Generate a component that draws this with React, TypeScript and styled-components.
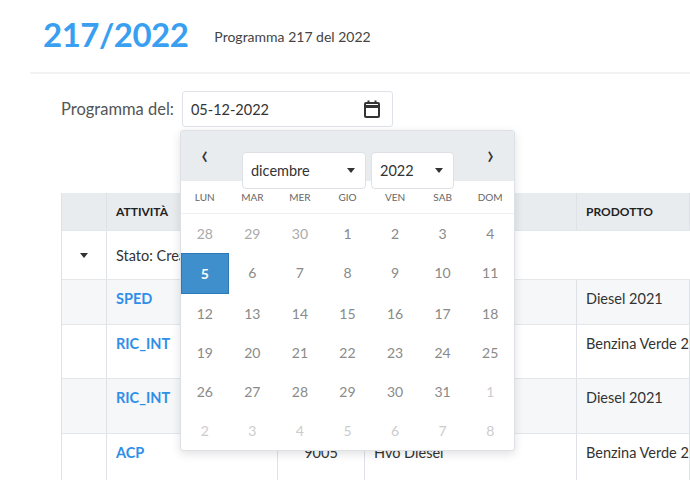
import styled, { createGlobalStyle } from 'styled-components';

const Global = createGlobalStyle`
  body { margin: 0; font-family: Lato, 'Noto Sans', sans-serif; color: #333; background: #fff; }
`;

const Page = styled.div`
  width: 690px;
  height: 480px;
  overflow: hidden;
  position: relative;
`;
const TitleBar = styled.div`
  display: flex;
  align-items: center;
  gap: 26px;
  height: 74px;
  padding: 0 0 4px 13px;
  margin-left: 30px;
  border-bottom: 2px solid #f1f3f5;
  box-sizing: border-box;
`;
const Title = styled.h1`
  margin: 0;
  font-size: 33px;
  font-weight: 700;
  color: #3a9ff0;
  letter-spacing: -0.5px;
`;
const Subtitle = styled.span`
  font-size: 14px;
  color: #444;
  padding-top: 4px;
`;
const FilterRow = styled.div`
  display: flex;
  align-items: center;
  gap: 8px;
  padding: 17px 0 0 61px;
`;
const Label = styled.span`
  font-size: 16.5px;
  color: #555;
`;
const DateInput = styled.div`
  width: 211px;
  height: 36px;
  box-sizing: border-box;
  border: 1px solid #dfe3e7;
  border-radius: 3px;
  display: flex;
  align-items: center;
  justify-content: space-between;
  padding: 0 10px 0 8px;
  font-size: 14.5px;
  color: #333;
`;
const Table = styled.div`
  margin: 66px 0 0 61px;
  border-left: 1px solid #dee2e6;
`;
const Row = styled.div<{ $bg: string; $h: number }>`
  display: grid;
  grid-template-columns: 45px 171px 87px 212px 1fr;
  height: ${(p) => p.$h}px;
  background: ${(p) => p.$bg};
  border-bottom: 1px solid #e4e7ea;
  box-sizing: border-box;
`;
const Cell = styled.div<{ $center?: boolean; $top?: boolean }>`
  border-right: 1px solid #dee2e6;
  padding: ${(p) => (p.$top ? '10px 9px' : '0 9px')};
  display: flex;
  align-items: ${(p) => (p.$top ? 'flex-start' : 'center')};
  justify-content: ${(p) => (p.$center ? 'center' : 'flex-start')};
  font-size: 14.5px;
  white-space: nowrap;
  overflow: hidden;
`;
const HeadCell = styled(Cell)`
  font-size: 12px;
  font-weight: 700;
  color: #222;
`;
const Link = styled.span`
  color: #2f8fe8;
  font-weight: 700;
`;
const GroupCell = styled.div`
  grid-column: 2 / 6;
  display: flex;
  align-items: center;
  padding: 0 9px;
  font-size: 14.5px;
`;
const Popup = styled.div`
  position: absolute;
  left: 180px;
  top: 130px;
  width: 335px;
  height: 321px;
  background: #fff;
  border: 1px solid #dde1e5;
  border-radius: 3px;
  box-shadow: 0 3px 10px rgba(0, 0, 0, 0.12);
  box-sizing: border-box;
`;
const CalHead = styled.div`
  background: #e9ecef;
  height: 50px;
  position: relative;
`;
const Nav = styled.div`
  display: flex;
  justify-content: space-between;
  padding: 8px 20px 0 20px;
  font-size: 26px;
  line-height: 30px;
  color: #333;
`;
const Selects = styled.div`
  position: absolute;
  top: 21px;
  left: 61px;
  display: flex;
  gap: 5px;
`;
const Select = styled.div<{ $w: number }>`
  width: ${(p) => p.$w}px;
  height: 37px;
  box-sizing: border-box;
  background: #fff;
  border: 1px solid #dde1e5;
  border-radius: 4px;
  display: flex;
  align-items: center;
  justify-content: space-between;
  padding: 0 10px 0 8px;
  font-size: 14.5px;
  color: #333;
`;
const Caret = styled.span`
  width: 0;
  height: 0;
  border-left: 4px solid transparent;
  border-right: 4px solid transparent;
  border-top: 5px solid #333;
`;
const Grid = styled.div`
  display: grid;
  grid-template-columns: repeat(7, 1fr);
`;
const Week = styled.div`
  display: grid;
  grid-template-columns: repeat(7, 1fr);
  height: 32px;
  align-items: center;
  border-bottom: 1px solid #eef0f2;
`;
const Dow = styled.div`
  text-align: center;
  font-size: 10px;
  color: #666;
`;
const Day = styled.div<{ $tone: 'out' | 'in' | 'sel' | 'faint' }>`
  height: 39px;
  display: flex;
  align-items: center;
  justify-content: center;
  font-size: 14px;
  border-bottom: 1px solid #f1f2f4;
  background: ${(p) => (p.$tone === 'sel' ? '#3f8fcc' : 'transparent')};
  color: ${(p) =>
    p.$tone === 'sel' ? '#fff' : p.$tone === 'in' ? '#8a8a8a' : p.$tone === 'out' ? '#aaa' : '#ccc'};
  font-weight: ${(p) => (p.$tone === 'sel' ? 700 : 400)};
  border: ${(p) => (p.$tone === 'sel' ? '1px solid #2d7ab8' : 'none')};
`;

const CalIcon = () => (
  <svg width="20" height="20" viewBox="0 0 20 20" fill="none" stroke="#333" strokeWidth="2">
    <rect x="3" y="4" width="14" height="14" rx="1" />
    <line x1="3" y1="7.5" x2="17" y2="7.5" strokeWidth="3" />
    <line x1="6.5" y1="1.5" x2="6.5" y2="4" />
    <line x1="13.5" y1="1.5" x2="13.5" y2="4" />
  </svg>
);

const rows: { a: string; code?: string; desc?: string; prod: string; bg: string; h: number }[] = [
  { a: 'SPED', prod: 'Diesel 2021', bg: '#f5f7f9', h: 45 },
  { a: 'RIC_INT', prod: 'Benzina Verde 2021', bg: '#fff', h: 54 },
  { a: 'RIC_INT', prod: 'Diesel 2021', bg: '#f5f7f9', h: 55 },
  { a: 'ACP', code: '9005', desc: 'Hvo Diesel', prod: 'Benzina Verde 2021', bg: '#fff', h: 55 },
];

const weeks = [
  [28, 29, 30, 1, 2, 3, 4],
  [5, 6, 7, 8, 9, 10, 11],
  [12, 13, 14, 15, 16, 17, 18],
  [19, 20, 21, 22, 23, 24, 25],
  [26, 27, 28, 29, 30, 31, 1],
  [2, 3, 4, 5, 6, 7, 8],
];

export default function App() {
  return (
    <Page>
      <Global />
      <TitleBar>
        <Title>217/2022</Title>
        <Subtitle>Programma 217 del 2022</Subtitle>
      </TitleBar>
      <FilterRow>
        <Label>Programma del:</Label>
        <DateInput>
          05-12-2022
          <CalIcon />
        </DateInput>
      </FilterRow>
      <Table>
        <Row $bg="#e9ecef" $h={38}>
          <HeadCell />
          <HeadCell>ATTIVITÀ</HeadCell>
          <HeadCell />
          <HeadCell />
          <HeadCell>PRODOTTO</HeadCell>
        </Row>
        <Row $bg="#fff" $h={49}>
          <Cell $center>
            <Caret />
          </Cell>
          <GroupCell>Stato: Creato</GroupCell>
        </Row>
        {rows.map((r, i) => (
          <Row key={i} $bg={r.bg} $h={r.h}>
            <Cell />
            <Cell $top>
              <Link>{r.a}</Link>
            </Cell>
            <Cell $top $center>{r.code}</Cell>
            <Cell $top>{r.desc}</Cell>
            <Cell $top>{r.prod}</Cell>
          </Row>
        ))}
      </Table>
      <Popup>
        <CalHead>
          <Nav>
            <span>‹</span>
            <span>›</span>
          </Nav>
          <Selects>
            <Select $w={124}>
              dicembre <Caret />
            </Select>
            <Select $w={83}>
              2022 <Caret />
            </Select>
          </Selects>
        </CalHead>
        <Week>
          {['LUN', 'MAR', 'MER', 'GIO', 'VEN', 'SAB', 'DOM'].map((d) => (
            <Dow key={d}>{d}</Dow>
          ))}
        </Week>
        <Grid>
          {weeks.map((w, wi) =>
            w.map((d, di) => {
              const tone =
                wi === 0 && di < 3
                  ? 'out'
                  : wi === 1 && di === 0
                    ? 'sel'
                    : (wi === 4 && di === 6) || wi === 5
                      ? 'faint'
                      : 'in';
              return (
                <Day key={`${wi}-${di}`} $tone={tone}>
                  {d}
                </Day>
              );
            }),
          )}
        </Grid>
      </Popup>
    </Page>
  );
}
